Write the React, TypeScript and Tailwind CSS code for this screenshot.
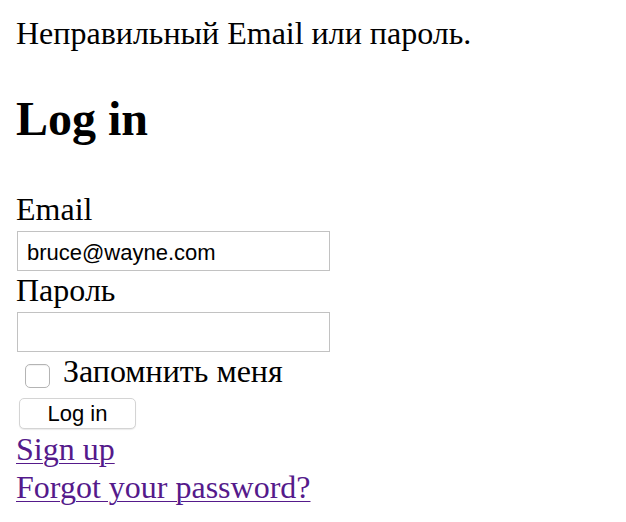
export default function App() {
  return (
    <div className="min-h-screen bg-white pl-4 font-['Liberation_Serif',serif] text-[32px] leading-[37px] text-black">
      <p className="pt-[15px] whitespace-nowrap">Неправильный Email или пароль.</p>
      <h2 className="mt-[39px] text-[48px] font-bold leading-[55px]">Log in</h2>
      <form onSubmit={(e) => e.preventDefault()}>
        <div className="mt-[43px]">
          <label className="block h-[37px] pt-[2px]">Email</label>
          <input
            type="email"
            defaultValue="bruce@wayne.com"
            className="ml-[1px] mt-[5px] block h-[40px] w-[313px] border border-[#c2c2c2] bg-white px-[9px] pt-[3px] font-['Liberation_Sans',sans-serif] text-[22px] leading-[26px] text-black outline-none"
          />
        </div>
        <div className="-mt-[1px]">
          <label className="block h-[37px] pt-[2px]">Пароль</label>
          <input
            type="password"
            className="ml-[1px] mt-[5px] block h-[40px] w-[313px] border border-[#c2c2c2] bg-white px-[9px] font-['Liberation_Sans',sans-serif] text-[22px] outline-none"
          />
        </div>
        <div className="-mt-[1px] flex h-[37px] items-start">
          <span className="ml-[9px] mt-[13px] block h-[24px] w-[25px] rounded-[5px] border border-[#b4b4b4] bg-white shadow-[inset_0_1px_1px_rgba(0,0,0,0.06)]" />
          <label className="ml-[13px] mt-[2px] whitespace-nowrap">Запомнить меня</label>
        </div>
        <div className="mt-[10px]">
          <button
            type="submit"
            className="ml-[3px] block h-[31px] w-[117px] rounded-[5px] border border-[#d4d4d4] bg-white font-['Liberation_Sans',sans-serif] text-[22px] leading-[26px] text-black shadow-[0_1px_1px_rgba(0,0,0,0.08)]"
          >
            Log in
          </button>
        </div>
      </form>
      <div className="mt-[2px]">
        <a href="#" className="text-[#551a8b] underline decoration-1 underline-offset-[3px]">
          Sign up
        </a>
      </div>
      <div className="mt-[1px]">
        <a href="#" className="text-[#551a8b] underline decoration-1 underline-offset-[3px]">
          Forgot your password?
        </a>
      </div>
    </div>
  );
}
